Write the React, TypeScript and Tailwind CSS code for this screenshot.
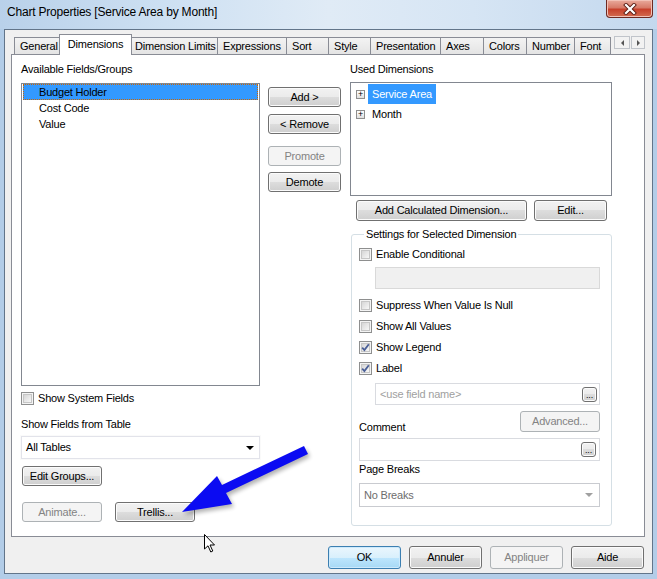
import clsx from 'clsx'
import type { ReactNode } from 'react'

const tabs: [string, number][] = [
  ['General', 48],
  ['Dimensions', 69],
  ['Dimension Limits', 89],
  ['Expressions', 70],
  ['Sort', 43],
  ['Style', 43],
  ['Presentation', 71],
  ['Axes', 44],
  ['Colors', 44],
  ['Number', 49],
  ['Font', 37],
]

function Btn({
  children,
  className,
  disabled,
  primary,
}: {
  children: ReactNode
  className?: string
  disabled?: boolean
  primary?: boolean
}) {
  return (
    <div
      className={clsx(
        'flex shrink-0 items-center justify-center whitespace-nowrap rounded-[3px] border',
        disabled
          ? 'border-[#adb2b5] bg-[#f4f4f4] text-[#838383]'
          : primary
            ? 'border-[#3c7fb1] bg-[linear-gradient(#eaf6fd_0%,#d9f0fc_50%,#bee6fd_50%,#a7d9f5_100%)] text-black shadow-[inset_0_0_0_1px_#cdeafc]'
            : 'border-[#707070] bg-[linear-gradient(#f2f2f2_0%,#ebebeb_50%,#dddddd_50%,#cfcfcf_100%)] text-black shadow-[inset_0_0_0_1px_#fbfbfb]',
        className,
      )}
    >
      {children}
    </div>
  )
}

function Check({ checked }: { checked?: boolean }) {
  return (
    <div className="flex h-[13px] w-[13px] shrink-0 items-center justify-center border border-[#8e8f8f] bg-[#f4f4f4]">
      <div className="relative h-[9px] w-[9px] border border-[#c6c6c6] bg-[linear-gradient(135deg,#d6d6d6,#f7f7f7)]">
        {checked && (
          <svg viewBox="0 0 9 9" className="absolute left-[-1px] top-[-1px] h-[9px] w-[9px]">
            <path d="M1.2 4.6 L3.4 7 L7.8 1.2" fill="none" stroke="#4a5f97" strokeWidth="1.8" />
          </svg>
        )}
      </div>
    </div>
  )
}

function CheckRow({ label, checked, className }: { label: string; checked?: boolean; className?: string }) {
  return (
    <div className={clsx('flex h-[13px] items-center gap-[4px]', className)}>
      <Check checked={checked} />
      <span>{label}</span>
    </div>
  )
}

function Dots() {
  return (
    <Btn className="h-[15px] w-[15px] items-end pb-[1px] text-[9px] leading-[9px]">...</Btn>
  )
}

export default function App() {
  return (
    <div className="relative flex h-[579px] w-[657px] flex-col overflow-hidden bg-[#b3cde8] font-['Liberation_Sans',Arial,sans-serif] text-[11px] leading-[13px] tracking-[-0.2px] text-black">
      {/* title bar */}
      <div className="flex h-[29px] shrink-0 items-start justify-between bg-[linear-gradient(90deg,#b9d1ea_0%,#cde0f2_25%,#e0ebf6_50%,#d6e5f4_72%,#c3d8ee_100%)]">
        <div className="pl-[7px] pt-[5px] text-[12px] leading-[14px]">Chart Properties [Service Area by Month]</div>
        <div className="mr-[4px] flex h-[18px] w-[47px] items-center justify-center rounded-b-[4px] border border-t-0 border-[#6d2a22] bg-[linear-gradient(#e9aa9c_0%,#d77a68_45%,#c7402b_55%,#d26c50_100%)] shadow-[inset_0_0_0_1px_#f2c1b6]">
          <svg viewBox="0 0 14 12" className="h-[12px] w-[14px]">
            <path d="M3 2 L11 10 M11 2 L3 10" stroke="#5a1c14" strokeWidth="4" strokeLinecap="square" />
            <path d="M3 2 L11 10 M11 2 L3 10" stroke="#ffffff" strokeWidth="2.2" strokeLinecap="square" />
          </svg>
        </div>
      </div>

      {/* window body */}
      <div className="ml-[4px] flex h-[545px] w-[649px] shrink-0 flex-col border border-[#62758a] bg-[#f0f0f0]">
        <div className="ml-[6px] mt-[4px] w-[634px]">
          {/* tabs */}
          <div className="flex h-[20px] items-end pl-[3px]">
            {tabs.map(([name, w], i) =>
              name === 'Dimensions' ? (
                <div
                  key={name}
                  style={{ width: w + 4 }}
                  className="relative z-10 -mb-px ml-[-3px] mr-[-2px] flex h-[21px] shrink-0 items-start justify-center whitespace-nowrap border border-b-0 border-[#898c95] bg-white pt-[3px]"
                >
                  {name}
                </div>
              ) : (
                <div
                  key={name}
                  style={{ width: w }}
                  className={clsx(
                    'flex h-[17px] shrink-0 items-center overflow-hidden whitespace-nowrap border border-b-0 border-[#898c95] bg-[linear-gradient(#f3f3f3,#e4e4e4)] pl-[5px]',
                    i > 0 && 'ml-[-1px]',
                  )}
                >
                  {name}
                </div>
              ),
            )}
            <div className="mb-[5px] ml-[3px] flex gap-[1px]">
              <div className="flex h-[13px] w-[16px] items-center justify-center border border-[#c0c4ca] bg-[#f2f2f2]">
                <div className="h-0 w-0 border-y-[3px] border-r-[3px] border-y-transparent border-r-[#555]" />
              </div>
              <div className="flex h-[13px] w-[14px] items-center justify-center border border-[#c0c4ca] bg-[#f2f2f2]">
                <div className="h-0 w-0 border-y-[3px] border-l-[3px] border-y-transparent border-l-[#555]" />
              </div>
            </div>
          </div>

          {/* panel */}
          <div className="flex h-[483px] border border-[#898c95] bg-white">
            {/* left column */}
            <div className="ml-[9px] flex w-[239px] flex-col pt-[8px]">
              <div>Available Fields/Groups</div>
              <div className="mt-[7px] h-[303px] border border-[#828790] bg-white">
                <div className="ml-[1px] flex h-[16px] w-[235px] items-center border border-dotted border-[#cc6600] bg-[#3399ff] pl-[15px]">
                  Budget Holder
                </div>
                <div className="flex h-[16px] items-center pl-[17px]">Cost Code</div>
                <div className="flex h-[16px] items-center pl-[17px]">Value</div>
              </div>
              <CheckRow label="Show System Fields" className="mt-[6px]" />
              <div className="mt-[13px]">Show Fields from Table</div>
              <div className="mt-[5px] flex h-[23px] items-center justify-between border border-[#e2e3ea] bg-white pl-[4px] pr-[5px] shadow-[0_0_0_1px_#fafafa]">
                <span>All Tables</span>
                <div className="h-0 w-0 border-x-[4px] border-t-[4px] border-x-transparent border-t-black" />
              </div>
              <Btn className="ml-[1px] mt-[7px] h-[20px] w-[80px]">Edit Groups...</Btn>
              <div className="ml-[1px] mt-[16px] flex gap-[13px]">
                <Btn disabled className="h-[20px] w-[80px]">
                  Animate...
                </Btn>
                <Btn className="h-[20px] w-[80px]">Trellis...</Btn>
              </div>
            </div>

            {/* middle buttons */}
            <div className="ml-[8px] flex w-[73px] flex-col pt-[32px]">
              <Btn className="h-[20px]">Add &gt;</Btn>
              <Btn className="mt-[7px] h-[20px]">&lt; Remove</Btn>
              <Btn disabled className="mt-[12px] h-[20px]">
                Promote
              </Btn>
              <Btn className="mt-[6px] h-[20px]">Demote</Btn>
            </div>

            {/* right column */}
            <div className="ml-[9px] flex w-[262px] flex-col pt-[8px]">
              <div>Used Dimensions</div>
              <div className="mt-[6px] h-[114px] border border-[#828790] bg-white pt-[1px]">
                <div className="flex h-[20px] items-center pl-[5px]">
                  <div className="flex h-[9px] w-[9px] items-center justify-center border border-[#8f8f8f] bg-[linear-gradient(#ffffff,#e0e0e0)] text-[9px] leading-[7px] text-black">
                    +
                  </div>
                  <div className="ml-[3px] flex h-[20px] items-center bg-[#3399ff] px-[4px] text-white">Service Area</div>
                </div>
                <div className="flex h-[20px] items-center pl-[5px]">
                  <div className="flex h-[9px] w-[9px] items-center justify-center border border-[#8f8f8f] bg-[linear-gradient(#ffffff,#e0e0e0)] text-[9px] leading-[7px] text-black">
                    +
                  </div>
                  <div className="ml-[7px]">Month</div>
                </div>
              </div>
              <div className="mt-[4px] flex">
                <Btn className="ml-[6px] h-[21px] w-[171px]">Add Calculated Dimension...</Btn>
                <Btn className="ml-[7px] h-[21px] w-[73px]">Edit...</Btn>
              </div>

              <fieldset className="ml-[1px] mt-[7px] w-[261px] rounded-[3px] border border-[#d5dfe5] pb-[18px] pl-[7px] pr-[11px]">
                <legend className="ml-[5px] px-[2px] leading-[13px]">Settings for Selected Dimension</legend>
                <CheckRow label="Enable Conditional" className="mt-[7px]" />
                <div className="ml-[16px] mt-[6px] h-[22px] border border-[#d9d9d9] bg-[#f0f0f0]" />
                <CheckRow label="Suppress When Value Is Null" className="mt-[10px]" />
                <CheckRow label="Show All Values" className="mt-[8px]" />
                <CheckRow label="Show Legend" checked className="mt-[8px]" />
                <CheckRow label="Label" checked className="mt-[8px]" />
                <div className="ml-[16px] mt-[8px] flex h-[22px] items-center justify-between border border-[#d9dbe0] bg-white pl-[4px] pr-[2px]">
                  <span className="text-[#a0a0a0]">&lt;use field name&gt;</span>
                  <Dots />
                </div>
                <div className="mt-[6px] flex h-[21px] items-end justify-between">
                  <span className="mb-[-2px]">Comment</span>
                  <Btn disabled className="h-[21px] w-[80px]">
                    Advanced...
                  </Btn>
                </div>
                <div className="mt-[6px] flex h-[23px] items-center justify-end border border-[#d9dbe0] bg-white pr-[3px]">
                  <Dots />
                </div>
                <div className="mt-[2px]">Page Breaks</div>
                <div className="mt-[7px] flex h-[24px] items-center justify-between border border-[#c9cbd0] bg-white pl-[4px] pr-[6px]">
                  <span className="text-[#6d6d6d]">No Breaks</span>
                  <div className="h-0 w-0 border-x-[4px] border-t-[4px] border-x-transparent border-t-[#a0a0a0]" />
                </div>
              </fieldset>
            </div>
          </div>
        </div>

        {/* dialog buttons */}
        <div className="mt-[9px] flex justify-end gap-[8px] pr-[8px]">
          <Btn primary className="h-[23px] w-[73px]">
            OK
          </Btn>
          <Btn className="h-[23px] w-[73px]">Annuler</Btn>
          <Btn disabled className="h-[23px] w-[73px]">
            Appliquer
          </Btn>
          <Btn className="h-[23px] w-[73px]">Aide</Btn>
        </div>
      </div>

      {/* annotation arrow + mouse pointer */}
      <svg className="pointer-events-none absolute left-0 top-0" width="657" height="579" viewBox="0 0 657 579">
        <defs>
          <filter id="blur" x="-20%" y="-20%" width="140%" height="140%">
            <feGaussianBlur stdDeviation="2" />
          </filter>
        </defs>
        <polygon
          points="304,446 308,454 226,493 232,504 182,512 217,476 222,485"
          fill="#000"
          opacity="0.3"
          transform="translate(2,3)"
          filter="url(#blur)"
        />
        <polygon points="304,446 308,454 226,493 232,504 182,512 217,476 222,485" fill="#0b0bf2" />
        <path
          d="M204.5 534.5 L204.5 549 L208 545.8 L210.8 552 L212.8 551 L210 545 L214.5 545 Z"
          fill="#fff"
          stroke="#000"
          strokeWidth="1"
          strokeLinejoin="miter"
        />
      </svg>
    </div>
  )
}
